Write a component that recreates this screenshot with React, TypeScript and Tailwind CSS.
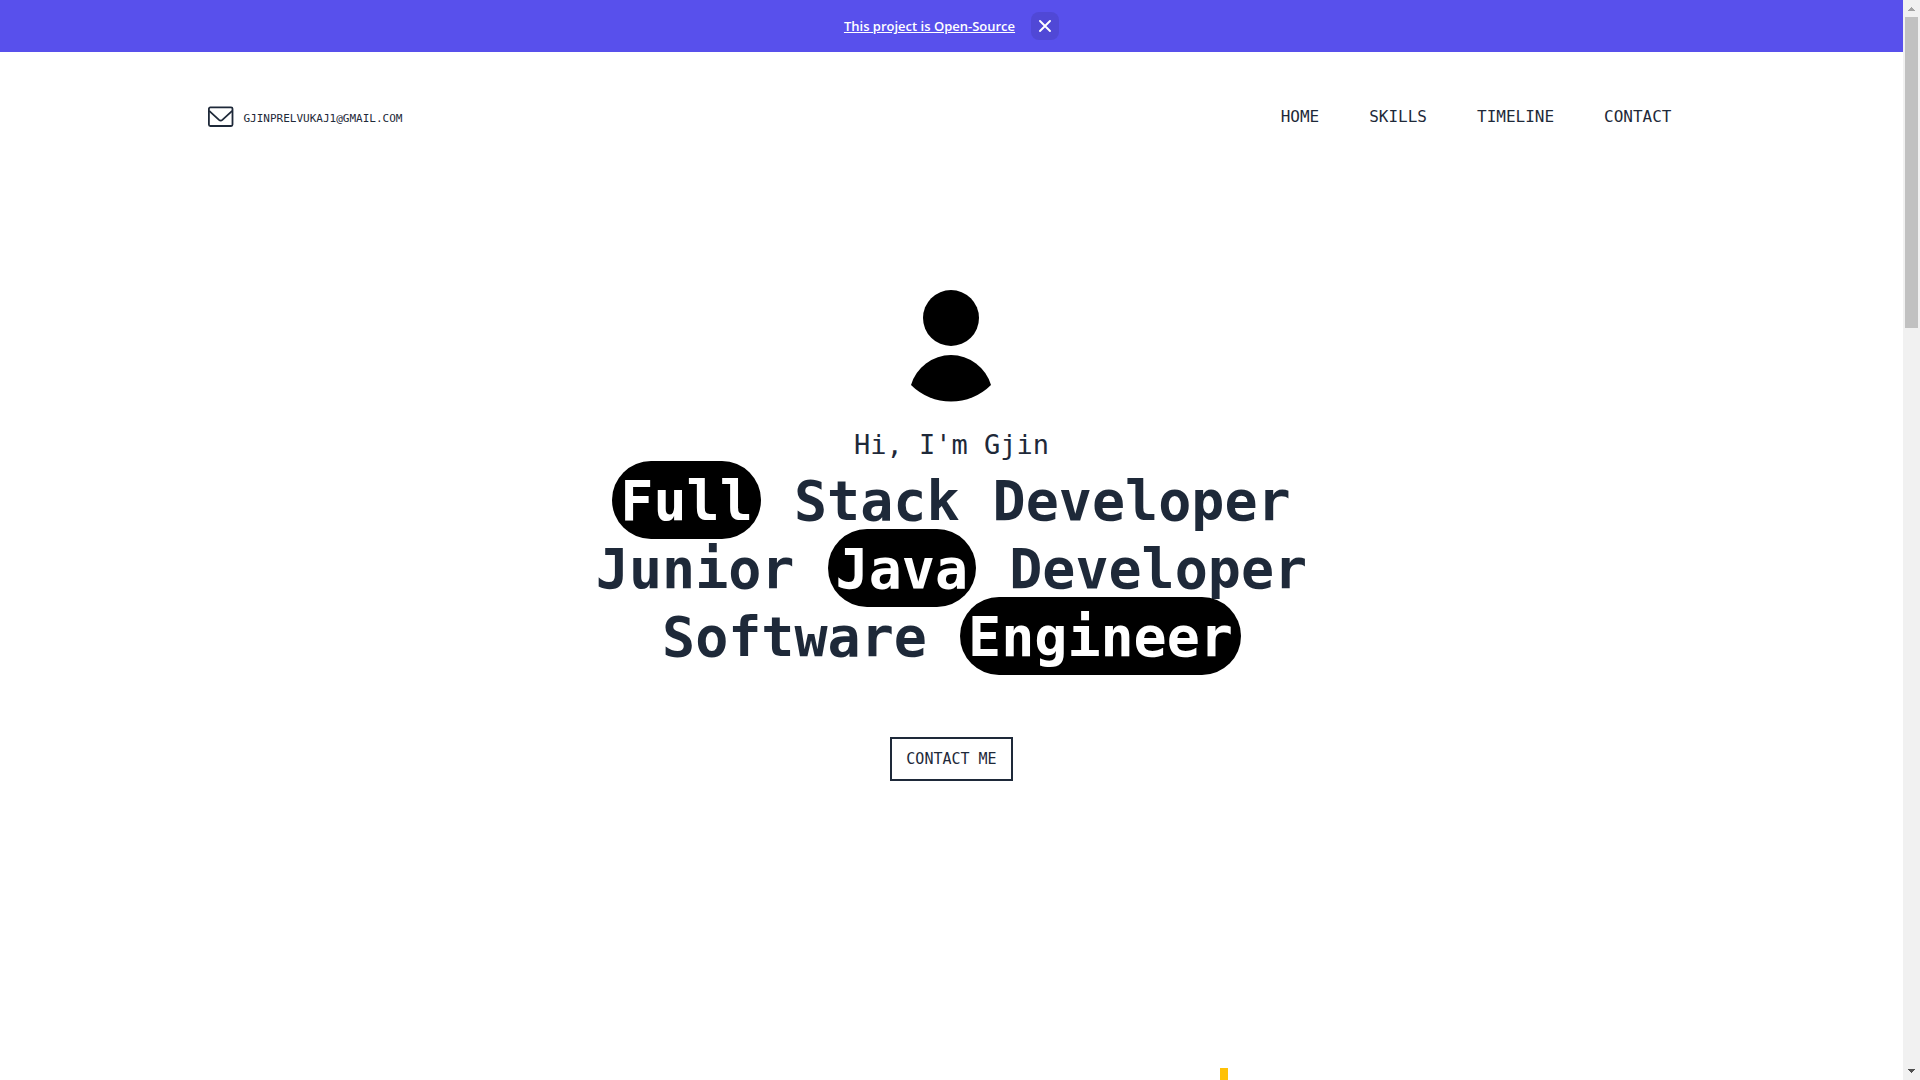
import type { ReactNode } from "react";

const links = ["HOME", "SKILLS", "TIMELINE", "CONTACT"];

function Pill({ children }: { children: ReactNode }) {
  return <span className="rounded-full bg-black px-2 pt-2 pb-1.5 text-white">{children}</span>;
}

function EnvelopeIcon() {
  return (
    <svg width="26" height="22" viewBox="0 0 26 22" fill="none" stroke="currentColor" strokeWidth="1.8" aria-hidden="true">
      <rect x="0.9" y="1.4" width="23.6" height="18.6" rx="1.4" />
      <path d="M1.2 4.8 11 13.9Q12.7 15.3 14.4 13.9L24.2 4.8" />
    </svg>
  );
}

function Banner() {
  return (
    <div className="flex h-[52px] items-center justify-center gap-4 bg-[#5850ec] font-['Open_Sans',sans-serif] text-white">
      <a href="#source" className="text-[13px] leading-5 font-semibold underline">
        This project is Open-Source
      </a>
      <button type="button" aria-label="Dismiss" className="flex size-7 items-center justify-center rounded-lg bg-[#5048d6]">
        <svg width="12" height="12" viewBox="0 0 12 12" fill="none" stroke="currentColor" strokeWidth="1.9" strokeLinecap="round" aria-hidden="true">
          <path d="M1 1 11 11M11 1 1 11" />
        </svg>
      </button>
    </div>
  );
}

function Header() {
  return (
    <header className="mx-auto mt-[49px] flex w-full max-w-[1536px] items-center justify-between px-6">
      <a href="mailto:gjinprelvukaj1@gmail.com" className="flex h-8 items-center gap-2.5">
        <EnvelopeIcon />
        <span className="pt-1 text-[11px] leading-4">GJINPRELVUKAJ1@GMAIL.COM</span>
      </a>
      <nav className="flex gap-[50px] pr-6 text-base leading-6">
        {links.map((label) => (
          <a key={label} href={"#" + label.toLowerCase()}>
            {label}
          </a>
        ))}
      </nav>
    </header>
  );
}

function Scrollbar() {
  return (
    <div aria-hidden="true" className="flex w-[17px] shrink-0 flex-col items-center bg-[#f1f1f1]">
      <svg width="17" height="17" viewBox="0 0 17 17" fill="#a3a3a3">
        <path d="M8 7h1v1h1v1h1v1h1v1H5v-1h1V9h1V8h1z" />
      </svg>
      <div className="h-[28.8%] w-[13px] bg-[#c1c1c1]" />
      <svg className="mt-auto" width="17" height="17" viewBox="0 0 17 17" fill="#505050">
        <path d="M5 6h7v1h-1v1h-1v1H9v1H8V9H7V8H6V7H5z" />
      </svg>
    </div>
  );
}

export default function App() {
  return (
    <div className="flex h-screen overflow-hidden bg-white font-['DejaVu_Sans_Mono',monospace] text-gray-800">
      <div className="flex min-w-0 flex-1 flex-col">
        <Banner />
        <Header />
        <main className="mt-[157px] flex flex-col items-center text-center">
          <svg width="81" height="112" viewBox="0 0 81 112" fill="#000" role="img" aria-label="Profile">
            <circle cx="40" cy="28" r="28" />
            <path d="M0 95A41.7 41.7 0 0 1 80 95A56.7 56.7 0 0 1 0 95Z" />
          </svg>
          <p className="mt-[25px] text-[27px] leading-9">Hi, I'm Gjin</p>
          <h1 className="mt-1 text-[55px] leading-[68px] font-semibold">
            <Pill>Full</Pill> Stack Developer
            <br />
            Junior <Pill>Java</Pill> Developer
            <br />
            Software <Pill>Engineer</Pill>
          </h1>
          <button type="button" className="mt-[66px] h-11 border-2 border-gray-800 px-3.5 text-[15px] leading-6">
            CONTACT ME
          </button>
        </main>
        <div aria-hidden="true" className="mt-auto ml-[545px] h-3 w-2 self-center bg-[#ffc107]" />
      </div>
      <Scrollbar />
    </div>
  );
}
